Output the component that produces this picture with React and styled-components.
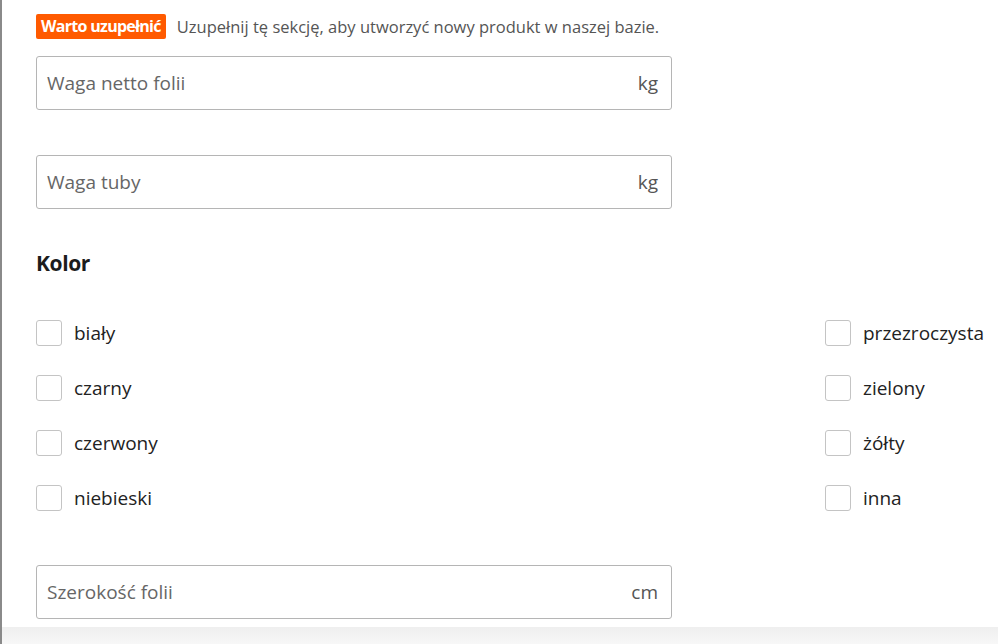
import React from 'react';
import styled, { createGlobalStyle } from 'styled-components';

const GlobalStyle = createGlobalStyle`
  html, body {
    margin: 0;
    padding: 0;
    background: #ffffff;
    font-family: "Open Sans", "Liberation Sans", sans-serif;
  }
`;

const Page = styled.div`
  width: 998px;
  height: 644px;
  box-sizing: border-box;
  border-left: 2px solid #8a8a8a;
  display: flex;
  flex-direction: column;
  overflow: hidden;
`;

const Section = styled.div`
  flex: 1;
  padding: 14px 0 0 34px;
  display: flex;
  flex-direction: column;
`;

const Hint = styled.div`
  display: flex;
  align-items: center;
  gap: 11px;
  height: 25px;
`;

const Badge = styled.span`
  background: #ff5a00;
  color: #ffffff;
  font-weight: 700;
  font-size: 16px;
  letter-spacing: -0.7px;
  border-radius: 2px;
  padding: 0 5px;
  height: 25px;
  line-height: 25px;
`;

const HintText = styled.span`
  color: #555;
  font-size: 16.5px;
`;

const Field = styled.label`
  margin-top: ${(p) => p.$top}px;
  width: 636px;
  height: 54px;
  box-sizing: border-box;
  border: 1px solid #b5b5b5;
  border-radius: 3px;
  display: flex;
  align-items: center;
  justify-content: space-between;
  padding: 0 13px 0 10px;
  font-size: 19px;
  color: #666;
`;

const Unit = styled.span`
  color: #555;
  font-size: 19px;
`;

const Heading = styled.h3`
  margin: 40px 0 0;
  font-size: 21px;
  font-weight: 700;
  color: #1c1c1c;
  letter-spacing: -0.4px;
`;

const Options = styled.div`
  margin-top: 43px;
  display: grid;
  grid-template-columns: 789px 1fr;
  grid-auto-flow: column;
  grid-template-rows: repeat(4, 26px);
  row-gap: 29px;
`;

const Option = styled.label`
  display: flex;
  align-items: center;
  gap: 12px;
  font-size: 19px;
  color: #222;
`;

const Box = styled.span`
  width: 26px;
  height: 26px;
  flex: none;
  box-sizing: border-box;
  border: 1px solid #c4c4c4;
  border-radius: 3px;
  background: #fff;
`;

const Footer = styled.div`
  height: 17px;
  background: linear-gradient(#efefef, #f7f7f7);
`;

const colors = [
  'biały',
  'czarny',
  'czerwony',
  'niebieski',
  'przezroczysta',
  'zielony',
  'żółty',
  'inna',
];

export default function App() {
  return (
    <>
      <GlobalStyle />
      <Page>
        <Section>
          <Hint>
            <Badge>Warto uzupełnić</Badge>
            <HintText>Uzupełnij tę sekcję, aby utworzyć nowy produkt w naszej bazie.</HintText>
          </Hint>
          <Field $top={17}>
            <span>Waga netto folii</span>
            <Unit>kg</Unit>
          </Field>
          <Field $top={45}>
            <span>Waga tuby</span>
            <Unit>kg</Unit>
          </Field>
          <Heading>Kolor</Heading>
          <Options>
            {colors.map((c) => (
              <Option key={c}>
                <Box />
                {c}
              </Option>
            ))}
          </Options>
          <Field $top={54}>
            <span>Szerokość folii</span>
            <Unit>cm</Unit>
          </Field>
        </Section>
        <Footer />
      </Page>
    </>
  );
}
